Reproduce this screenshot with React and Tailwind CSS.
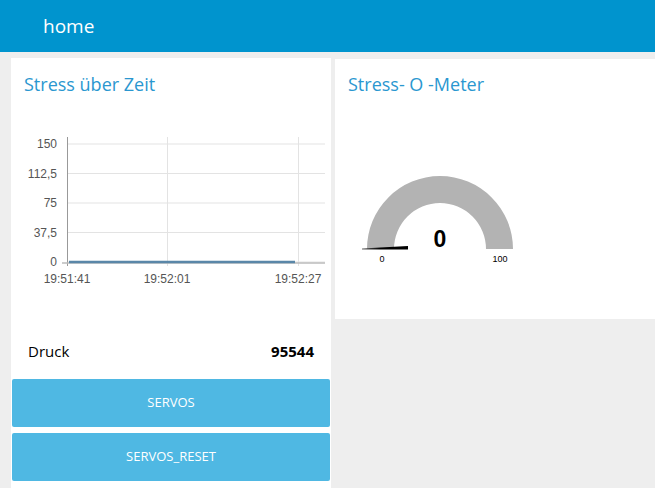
import React from "react";

function Chart() {
  const ys = [
    { v: "150", y: 36 },
    { v: "112,5", y: 65.5 },
    { v: "75", y: 95 },
    { v: "37,5", y: 124.5 },
    { v: "0", y: 154 },
  ];
  return (
    <svg width="320" height="220" className="block" style={{ fontFamily: '"Liberation Sans", Arial, sans-serif' }}>
      {ys.map((t) => (
        <g key={t.v}>
          <line x1="56" x2="314" y1={t.y} y2={t.y} stroke="#e3e3e3" strokeWidth="1" />
          <text x="46" y={t.y + 4} textAnchor="end" fontSize="12" fill="#555">{t.v}</text>
        </g>
      ))}
      <line x1="156.5" x2="156.5" y1="29" y2="158" stroke="#e3e3e3" />
      <line x1="287.5" x2="287.5" y1="29" y2="158" stroke="#e3e3e3" />
      <line x1="56.5" x2="56.5" y1="29" y2="158" stroke="#999" />
      <line x1="51" x2="314" y1="155" y2="155" stroke="#bbb" strokeWidth="1.5" />
      <line x1="58" x2="284" y1="154" y2="154" stroke="#5a87a8" strokeWidth="2.5" />
      <text x="56" y="175" textAnchor="middle" fontSize="12" fill="#555">19:51:41</text>
      <text x="156" y="175" textAnchor="middle" fontSize="12" fill="#555">19:52:01</text>
      <text x="287" y="175" textAnchor="middle" fontSize="12" fill="#555">19:52:27</text>
    </svg>
  );
}

function Gauge() {
  const cx = 105, cy = 141, R = 73, r = 46;
  const d = `M ${cx - R} ${cy} A ${R} ${R} 0 0 1 ${cx + R} ${cy} L ${cx + r} ${cy} A ${r} ${r} 0 0 0 ${cx - r} ${cy} Z`;
  return (
    <svg width="320" height="210" className="block" style={{ fontFamily: '"Liberation Sans", Arial, sans-serif' }}>
      <defs>
        <linearGradient id="ng" x1="0" x2="1" y1="0" y2="0">
          <stop offset="0" stopColor="#666" />
          <stop offset="0.4" stopColor="#000" />
          <stop offset="1" stopColor="#000" />
        </linearGradient>
      </defs>
      <path d={d} fill="#b3b3b3" />
      <polygon points="27,140.5 73,138 73,141.5 27,141.5" fill="url(#ng)" />
      <text x="105" y="139" textAnchor="middle" fontSize="23" fontWeight="bold" fill="#000">0</text>
      <text x="47" y="154" textAnchor="middle" fontSize="9" fill="#000">0</text>
      <text x="165" y="154" textAnchor="middle" fontSize="9" fill="#000">100</text>
    </svg>
  );
}

export default function App() {
  const font = { fontFamily: '"Open Sans", "Noto Sans", sans-serif' };
  return (
    <div className="w-[655px] h-[488px] overflow-hidden bg-[#eeeeee]" style={font}>
      <div className="h-[52px] bg-[#0094ce] flex items-center pl-[43px]">
        <span className="text-white text-[19px] leading-none">home</span>
      </div>
      <div className="flex gap-[4px] pl-[11px] pt-[6px]">
        <div className="w-[320px] h-[440px] bg-white flex flex-col shrink-0">
          <div className="h-[50px] flex items-center pl-[13px] pt-[2px]">
            <span className="text-[#2a97d0] text-[18px]">Stress über Zeit</span>
          </div>
          <Chart />
          <div className="h-[46px] flex items-center justify-between pl-[17px] pr-[17px] text-[15px] text-black">
            <span>Druck</span>
            <span className="font-bold">95544</span>
          </div>
          <div className="flex flex-col gap-[6px] px-[1px] mt-[5px]">
            <button className="h-[48px] rounded-[2px] bg-[#4fb8e3] text-white text-[13px]">SERVOS</button>
            <button className="h-[48px] rounded-[2px] bg-[#4fb8e3] text-white text-[13px]">SERVOS_RESET</button>
          </div>
        </div>
        <div className="w-[330px] h-[260px] bg-white flex flex-col mt-[1px] shrink-0">
          <div className="h-[49px] flex items-center pl-[13px] pt-[1px]">
            <span className="text-[#2a97d0] text-[18px]">Stress- O -Meter</span>
          </div>
          <Gauge />
        </div>
      </div>
    </div>
  );
}
